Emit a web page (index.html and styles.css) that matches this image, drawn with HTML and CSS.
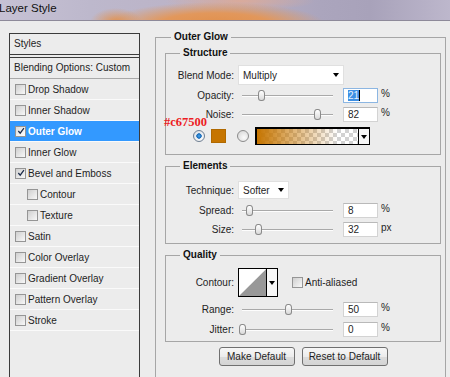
FILE: index.html
```html
<!DOCTYPE html>
<html lang="en">
<head>
    <meta charset="UTF-8">
    <meta name="viewport" content="width=device-width, initial-scale=1.0">
    <title>Layer Style</title>
    <link rel="stylesheet" href="styles.css">
</head>
<body>

    <div class="titlebar"><span class="title">Layer Style</span></div>

    <div class="dialog">

        <!-- Liste des styles -->
        <div class="styles-list">
            <div class="list-head">Styles</div>
            <div class="list-blend">Blending Options: Custom</div>
            <ul class="effects">
                <li><span class="cb"></span>Drop Shadow</li>
                <li><span class="cb"></span>Inner Shadow</li>
                <li class="active"><span class="cb checked"><svg viewBox="0 0 9 9"><path d="M1.5 4.5 L3.6 7 L7.8 1.2" fill="none" stroke="#1c2c4a" stroke-width="1.4"/></svg></span>Outer Glow</li>
                <li><span class="cb"></span>Inner Glow</li>
                <li><span class="cb checked"><svg viewBox="0 0 9 9"><path d="M1.5 4.5 L3.6 7 L7.8 1.2" fill="none" stroke="#1c2c4a" stroke-width="1.4"/></svg></span>Bevel and Emboss</li>
                <li class="sub"><span class="cb"></span>Contour</li>
                <li class="sub"><span class="cb"></span>Texture</li>
                <li><span class="cb"></span>Satin</li>
                <li><span class="cb"></span>Color Overlay</li>
                <li><span class="cb"></span>Gradient Overlay</li>
                <li><span class="cb"></span>Pattern Overlay</li>
                <li><span class="cb"></span>Stroke</li>
            </ul>
        </div>

        <!-- Réglages -->
        <div class="settings">
            <fieldset class="group outer">
                <legend>Outer Glow</legend>

                <fieldset class="group structure">
                    <legend>Structure</legend>
                    <div class="field field-select">
                        <span class="label">Blend Mode:</span>
                        <div class="select blend">Multiply<span class="caret"></span></div>
                    </div>
                    <div class="field">
                        <span class="label">Opacity:</span>
                        <div class="slider"><div class="track"><span class="thumb" style="left:21%"></span></div></div>
                        <span class="num focused"><span class="sel">21</span><span class="ibeam"></span></span>
                        <span class="unit">%</span>
                    </div>
                    <div class="field noise">
                        <span class="label">Noise:</span>
                        <div class="slider"><div class="track"><span class="thumb" style="left:82%"></span></div></div>
                        <span class="num">82</span>
                        <span class="unit">%</span>
                        <span class="annot">#c67500</span>
                    </div>
                    <div class="color-row">
                        <span class="radio on"></span>
                        <span class="swatch"></span>
                        <span class="radio"></span>
                        <div class="gradient"><span class="grad-fill"></span><span class="grad-drop"><span class="caret"></span></span></div>
                    </div>
                </fieldset>

                <fieldset class="group elements">
                    <legend>Elements</legend>
                    <div class="field field-tech">
                        <span class="label">Technique:</span>
                        <div class="select tech">Softer<span class="caret"></span></div>
                    </div>
                    <div class="field">
                        <span class="label">Spread:</span>
                        <div class="slider"><div class="track"><span class="thumb" style="left:8%"></span></div></div>
                        <span class="num">8</span>
                        <span class="unit">%</span>
                    </div>
                    <div class="field">
                        <span class="label">Size:</span>
                        <div class="slider"><div class="track"><span class="thumb" style="left:17.5%"></span></div></div>
                        <span class="num">32</span>
                        <span class="unit">px</span>
                    </div>
                </fieldset>

                <fieldset class="group quality">
                    <legend>Quality</legend>
                    <div class="field field-contour">
                        <span class="label">Contour:</span>
                        <div class="contour">
                            <svg class="curve" viewBox="0 0 28 27" preserveAspectRatio="none"><polygon points="0,27 28,0 28,27" fill="#989898"/></svg>
                            <span class="contour-drop"><span class="caret"></span></span>
                        </div>
                        <span class="cb aa"></span><span class="aa-text">Anti-aliased</span>
                    </div>
                    <div class="field">
                        <span class="label">Range:</span>
                        <div class="slider"><div class="track"><span class="thumb" style="left:50%"></span></div></div>
                        <span class="num">50</span>
                        <span class="unit">%</span>
                    </div>
                    <div class="field">
                        <span class="label">Jitter:</span>
                        <div class="slider"><div class="track"><span class="thumb" style="left:0%"></span></div></div>
                        <span class="num">0</span>
                        <span class="unit">%</span>
                    </div>
                </fieldset>

                <div class="buttons">
                    <button class="btn make">Make Default</button>
                    <button class="btn reset">Reset to Default</button>
                </div>
            </fieldset>
        </div>

    </div>

</body>
</html>
```

FILE: styles.css
```css
body {
    margin: 0;
    width: 450px;
    height: 377px;
    overflow: hidden;
    background: #ececec;
    font-family: "Liberation Sans", Arial, sans-serif;
    font-size: 10px;
    color: #1e1e1e;
}

/* barre de titre */
.titlebar {
    height: 20px;
    border-bottom: 1px solid #8e8a9a;
    background:
        radial-gradient(ellipse 26px 14px at 116px 22px, rgba(226, 146, 80, 1), rgba(226, 146, 80, 0)),
        radial-gradient(ellipse 110px 22px at 215px 24px, #e1904c 0, rgba(228, 150, 86, 0.95) 50%, rgba(228, 150, 86, 0)),
        radial-gradient(ellipse 75px 10px at 240px 1px, rgba(222, 170, 150, 0.9), rgba(222, 170, 150, 0)),
        linear-gradient(to right, #c6c1d4 0, #bdb8cc 90px, #bbb2c6 200px, #aba5bd 320px, #a8a2ba 370px, #bdb7cc 450px);
}
.title {
    display: block;
    margin-left: -1px;
    font-size: 11.5px;
    line-height: 16px;
    color: #111;
}

.dialog {
    display: flex;
    align-items: flex-start;
    padding-left: 9px;
}

/* liste de gauche */
.styles-list {
    width: 131px;
    height: 344px;
    box-sizing: border-box;
    margin-top: 12px;
    border: 1px solid #3b3b3b;
    border-bottom: 0;
}
.list-head {
    height: 20px;
    line-height: 20px;
    padding-left: 4px;
    border-bottom: 1px solid #3b3b3b;
}
.list-blend {
    height: 20px;
    line-height: 20px;
    margin-top: 2px;
    padding-left: 4px;
    border-top: 1px solid #3b3b3b;
    border-bottom: 1px solid #a9a9a9;
}
.effects {
    list-style: none;
    margin: 0;
    padding: 0;
}
.effects li {
    display: flex;
    align-items: center;
    gap: 2px;
    height: 20px;
    padding-left: 5px;
    border-bottom: 1px solid #fafafa;
}
.effects li.sub {
    padding-left: 17px;
}
.effects li.active {
    background: #3399ff;
    color: #fff;
    font-weight: bold;
}
.cb {
    display: inline-flex;
    align-items: center;
    justify-content: center;
    width: 11px;
    height: 11px;
    box-sizing: border-box;
    border: 1px solid #959595;
    background: linear-gradient(135deg, #cfcfcf, #f8f8f8);
    flex: none;
}
.cb svg {
    width: 8px;
    height: 8px;
}
.active .cb {
    background: linear-gradient(135deg, #dcdcdc, #ffffff);
}

/* réglages */
.settings {
    margin-left: 15px;
    margin-top: 10px;
}
fieldset.group {
    margin: 0;
    padding: 0;
    min-width: 0;
    border: 1px solid #a6a6a6;
    box-sizing: border-box;
}
fieldset.group legend {
    padding: 0 3px;
    font-weight: bold;
    line-height: 12px;
    color: #111;
}
.outer {
    width: 291px;
    height: 346px;
    padding: 4px 4px 0 9px !important;
    border-bottom: 0 !important;
}
.outer > legend {
    margin-left: 6px;
}
.structure, .elements, .quality {
    width: 276px;
}
.structure > legend, .elements > legend, .quality > legend {
    margin-left: 14px;
}
.structure {
    padding: 6px 0 9px 0 !important;
}
.elements {
    margin-top: 5px !important;
    padding: 9px 0 6px 0 !important;
}
.quality {
    margin-top: 5px !important;
    padding: 7px 0 4px 0 !important;
}

.field {
    display: flex;
    align-items: center;
    height: 15px;
    margin-top: 4px;
    position: relative;
}
.field-select {
    height: 20px;
    margin-top: 0;
}
.field-tech {
    height: 18px;
    margin-top: 0;
}
.field-contour {
    height: 29px;
    margin-top: 0;
}
.structure .field-select + .field {
    margin-top: 3px;
}
.quality .field {
    margin-top: 5px;
}
.quality .field-contour {
    margin-top: 0;
}
.label {
    width: 68px;
    margin-right: 4px;
    text-align: right;
    flex: none;
}

.select {
    position: relative;
    box-sizing: border-box;
    height: 100%;
    padding-left: 4px;
    background: #fff;
    border: 1px solid #e0e0e0;
    display: flex;
    align-items: center;
}
.select.blend {
    width: 106px;
}
.select.tech {
    width: 51px;
}
.select .caret {
    position: absolute;
    right: 4px;
    top: 50%;
    margin-top: -2px;
}
.caret {
    display: inline-block;
    width: 0;
    height: 0;
    border-left: 3.5px solid transparent;
    border-right: 3.5px solid transparent;
    border-top: 4px solid #000;
}

.slider {
    width: 99px;
    flex: none;
}
.track {
    position: relative;
    margin: 0 4px;
    height: 0;
    border-top: 1px solid #a9a9a9;
    border-bottom: 1px solid #fdfdfd;
}
.thumb {
    position: absolute;
    top: -6px;
    width: 7px;
    height: 11px;
    box-sizing: border-box;
    margin-left: -3px;
    border: 1px solid #8a8a8a;
    border-radius: 3px 3px 3px 3px / 4px 4px 3px 3px;
    background: linear-gradient(#ffffff, #d9d9d9);
}

.num {
    width: 35px;
    height: 15px;
    box-sizing: border-box;
    margin-left: 6px;
    padding-left: 4px;
    line-height: 13px;
    background: #fff;
    border: 1px solid #d3d3d3;
    border-top-color: #b9b9b9;
    display: flex;
    align-items: center;
    flex: none;
}
.num.focused {
    border-color: #8cb6e2;
}
.sel {
    background: #3d8fe4;
    color: #e8f2ff;
    line-height: 11px;
}
.ibeam {
    width: 1px;
    height: 11px;
    background: #000;
}
.unit {
    margin-left: 3px;
    align-self: flex-start;
    line-height: 11px;
}

.annot {
    position: absolute;
    left: -2px;
    top: 8px;
    font-family: "Liberation Serif", "Times New Roman", serif;
    font-weight: bold;
    font-size: 12.5px;
    line-height: 14px;
    color: #ec1c24;
}

/* couleur et dégradé */
.color-row {
    display: flex;
    align-items: center;
    height: 18px;
    margin-top: 5px;
    padding-left: 27px;
}
.radio {
    width: 12px;
    height: 12px;
    box-sizing: border-box;
    border-radius: 50%;
    border: 1px solid #8b8b8b;
    background: radial-gradient(circle at 60% 65%, #fbfbfb, #d2d2d2);
    flex: none;
}
.radio.on {
    border-color: #6f7f92;
    background:
        radial-gradient(circle at 50% 50%, #48a8f0 0, #1364b4 2.4px, rgba(0, 0, 0, 0) 3px),
        radial-gradient(circle at 60% 65%, #ffffff, #d7dbe0);
}
.swatch {
    width: 15px;
    height: 14px;
    box-sizing: border-box;
    margin-left: 6px;
    margin-right: 11px;
    background: #c67500;
    border: 1px solid #b06900;
}
.gradient {
    display: flex;
    width: 115px;
    height: 18px;
    box-sizing: border-box;
    margin-left: 6px;
    border: 1px solid #000;
    border-top-width: 2px;
    border-left-width: 2px;
}
.grad-fill {
    flex: 1;
    background:
        linear-gradient(to right, #c67500 0, rgba(198, 117, 0, 0.55) 35%, rgba(198, 117, 0, 0) 80%),
        conic-gradient(#ffffff 25%, #d2d2d2 0 50%, #ffffff 0 75%, #d2d2d2 0);
    background-size: 100% 100%, 8px 8px;
}
.grad-drop {
    width: 10px;
    border-left: 1px solid #000;
    background: #f6f6f6;
    display: flex;
    align-items: center;
    justify-content: center;
}

/* contour */
.contour {
    display: flex;
    width: 40px;
    height: 29px;
    box-sizing: border-box;
    border: 1px solid #000;
    background: #fff;
    flex: none;
}
.curve {
    width: 28px;
    height: 27px;
    display: block;
}
.contour-drop {
    width: 10px;
    border-left: 1px solid #000;
    background: #f7f7f7;
    display: flex;
    align-items: center;
    justify-content: center;
}
.cb.aa {
    width: 11px;
    height: 11px;
    margin-left: 14px;
}
.aa-text {
    margin-left: 2px;
}

/* boutons */
.buttons {
    display: flex;
    justify-content: center;
    gap: 7px;
    margin-top: 5px;
}
.btn {
    height: 19px;
    padding: 0;
    font-family: "Liberation Sans", Arial, sans-serif;
    font-size: 10px;
    color: #1e1e1e;
    border: 1px solid #707070;
    border-radius: 3px;
    background: linear-gradient(#f7f7f7, #ececec 50%, #dcdcdc 51%, #d4d4d4);
}
.btn.make {
    width: 76px;
}
.btn.reset {
    width: 86px;
}
```
